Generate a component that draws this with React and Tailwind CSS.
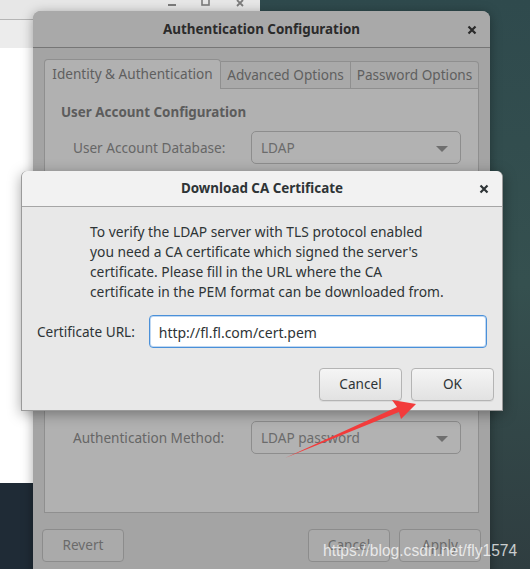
import React from "react";

const font = { fontFamily: '"Noto Sans", "Open Sans", sans-serif' };

function Combo({ value }) {
  return (
    <div className="w-[210px] h-[33px] flex items-center justify-between pl-[9px] pr-[12px] pt-[2px] rounded-[5px] border border-[#8d8d8d] bg-[#b2b2b2] text-[#6b6b6b]">
      <span>{value}</span>
      <span className="w-0 h-0 border-l-[6px] border-r-[6px] border-t-[6px] border-l-transparent border-r-transparent border-t-[#6f6f6f]" />
    </div>
  );
}

function DimButton({ children }) {
  return (
    <div className="w-[82px] h-[33px] flex items-center justify-center rounded-[4px] border border-[#8c8c8c] bg-[#aaaaaa] text-[#6a6a6a]">
      {children}
    </div>
  );
}

function Button({ children }) {
  return (
    <div className="w-[83px] h-[33px] flex items-center justify-center rounded-[4px] border border-[#b4b4b4] bg-gradient-to-b from-[#f5f5f5] to-[#e2e2e2] text-[#2e3436] shadow-[0_1px_0_rgba(0,0,0,0.06)]">
      {children}
    </div>
  );
}

export default function App() {
  return (
    <div
      className="relative w-[530px] h-[569px] overflow-hidden bg-gradient-to-b from-[#2f4a4d] via-[#35504f] to-[#2f3d40] text-[13.6px]"
      style={font}
    >
      {/* bottom-left desktop strip */}
      <div className="absolute left-0 top-[483px] w-[120px] h-[90px] bg-[#1f2b36]" />

      {/* background window */}
      <div className="absolute left-0 top-0 w-[260px] h-[483px] bg-white flex flex-col">
        <div className="h-[20px] bg-[#e7e7e7] border-b border-[#b5b5b5] flex items-start justify-end pr-[12px]">
          <svg width="80" height="8" viewBox="0 0 80 8" className="text-[#7c7c7c]">
            <rect x="0" y="4" width="8" height="2" fill="currentColor" />
            <rect x="34" y="-3" width="7" height="8" fill="none" stroke="currentColor" strokeWidth="1.6" />
            <path d="M69 0 L75 6 M75 0 L69 6" stroke="currentColor" strokeWidth="1.8" />
          </svg>
        </div>
        <div className="h-[28px] bg-[#ececec]" />
      </div>

      {/* main dialog (dimmed) */}
      <div className="absolute left-[33px] top-[11px] w-[457px] h-[570px] rounded-t-[8px] bg-[#a4a4a4] flex flex-col shadow-[0_2px_12px_rgba(0,0,0,0.35)]">
        <div className="h-[37px] shrink-0 rounded-t-[8px] bg-[#a9a9a9] border-b border-[#767676] flex items-center justify-center relative">
          <span className="font-bold text-[13.4px] text-[#2b2b2b]">Authentication Configuration</span>
          <svg className="absolute right-[13px] top-[14px]" width="10" height="10" viewBox="0 0 10 10">
            <path d="M1.5 1.5 L8.5 8.5 M8.5 1.5 L1.5 8.5" stroke="#2a2a2a" strokeWidth="2.2" />
          </svg>
        </div>
        <div className="px-[11px] pt-[11px] flex flex-col">
          <div className="flex items-end h-[30px]">
            <div className="w-[177px] h-[30px] rounded-t-[4px] border border-b-0 border-[#8f8f8f] bg-[#b1b1b1] flex items-center justify-center text-[#5f5f5f]">
              Identity &amp; Authentication
            </div>
            <div className="w-[130px] h-[28px] border border-l-0 border-[#8f8f8f] bg-[#a9a9a9] flex items-center justify-center text-[#5f5f5f]">
              Advanced Options
            </div>
            <div className="w-[128px] h-[28px] rounded-tr-[4px] border border-l-0 border-[#8f8f8f] bg-[#a9a9a9] flex items-center justify-center text-[#5f5f5f]">
              Password Options
            </div>
          </div>
          <div className="h-[424px] border border-t-0 border-[#8f8f8f] bg-[#b1b1b1] flex flex-col px-[16px] pt-[12px]">
            <div className="font-bold text-[13.4px] text-[#5c5c5c] leading-[23px]">User Account Configuration</div>
            <div className="flex items-center mt-[7px] pl-[12px]">
              <span className="w-[178px] pt-[2px] text-[#666666]">User Account Database:</span>
              <Combo value="LDAP" />
            </div>
            <div className="flex items-center mt-[257px] pl-[12px]">
              <span className="w-[178px] pt-[2px] text-[#666666]">Authentication Method:</span>
              <Combo value="LDAP password" />
            </div>
          </div>
          <div className="flex items-center justify-between mt-[16px]">
            <div className="-ml-[2px]">
              <DimButton>Revert</DimButton>
            </div>
            <div className="flex gap-[9px] -mr-[2px]">
              <DimButton>Cancel</DimButton>
              <DimButton>Apply</DimButton>
            </div>
          </div>
        </div>
      </div>

      {/* front dialog */}
      <div className="absolute left-[21px] top-[171px] w-[482px] h-[240px] rounded-t-[6px] bg-[#e8e8e8] border border-[#9a9a9a] border-t-0 flex flex-col shadow-[0_3px_14px_rgba(0,0,0,0.35)]">
        <div className="h-[36px] shrink-0 rounded-t-[6px] bg-[#f2f2f2] border-b border-[#a6a6a6] flex items-center justify-center relative">
          <span className="font-bold text-[13.4px] text-[#2e3436]">Download CA Certificate</span>
          <svg className="absolute right-[13px] top-[13px]" width="10" height="10" viewBox="0 0 10 10">
            <path d="M1.5 1.5 L8.5 8.5 M8.5 1.5 L1.5 8.5" stroke="#2e3436" strokeWidth="2.2" />
          </svg>
        </div>
        <div className="flex flex-col pt-[15px] px-[15px]">
          <p className="pl-[53px] leading-[20px] text-[13.8px] text-[#2e3436]">
            To verify the LDAP server with TLS protocol enabled
            <br />
            you need a CA certificate which signed the server's
            <br />
            certificate. Please fill in the URL where the CA
            <br />
            certificate in the PEM format can be downloaded from.
          </p>
          <div className="flex items-center mt-[13px]">
            <span className="w-[112px] pt-[2px] text-[#2e3436]">Certificate URL:</span>
            <div className="w-[339px] h-[33px] rounded-[4px] border border-[#4a90d9] bg-white flex items-center px-[9px] pt-[2px] text-[14px] text-[#2e3436] shadow-[inset_0_0_0_1px_rgba(74,144,217,0.35)]">
              http://fl.fl.com/cert.pem
            </div>
          </div>
          <div className="flex justify-end gap-[9px] mt-[20px] -mr-[7px]">
            <Button>Cancel</Button>
            <Button>OK</Button>
          </div>
        </div>
      </div>

      {/* red arrow annotation */}
      <svg className="absolute left-0 top-0" width="530" height="569" viewBox="0 0 530 569">
        <path d="M285 458 L397 407 L392 400 L416 404 L401 419 L399 412 Z" fill="#f23b3b" />
      </svg>

      {/* watermark */}
      <div
        className="absolute left-[323px] top-[539px] text-[15.6px] text-white/75"
        style={{ fontFamily: '"Liberation Sans", Arial, sans-serif' }}
      >
        https://blog.csdn.net/fly1574
      </div>
    </div>
  );
}
